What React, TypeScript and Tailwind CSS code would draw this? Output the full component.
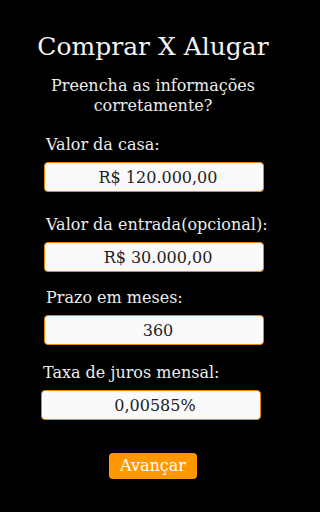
import React, { useState } from 'react';

const Campo: React.FC<{
  label: string;
  value: string;
  onChange: (v: string) => void;
  className?: string;
}> = ({ label, value, onChange, className }) => (
  <div className={'flex flex-col ' + (className ?? '')}>
    <label className="text-[16px] leading-[20px] text-[#ececec] pl-[2px] whitespace-nowrap">{label}</label>
    <input
      type="text"
      value={value}
      onChange={(e) => onChange(e.target.value)}
      className="mt-[7px] h-[30px] w-[220px] rounded-[4px] border border-[#e8890c] bg-[#fafafa] pl-[8px] text-center text-[16px] text-[#222] outline-none"
    />
  </div>
);

const App: React.FC = () => {
  const [valorCasa, setValorCasa] = useState('R$ 120.000,00');
  const [entrada, setEntrada] = useState('R$ 30.000,00');
  const [prazo, setPrazo] = useState('360');
  const [juros, setJuros] = useState('0,00585%');

  return (
    <div className="min-h-[512px] w-full bg-black">
      <div
        className="w-[306px] flex flex-col"
        style={{ fontFamily: '"DejaVu Serif", "Liberation Serif", serif' }}
      >
        <h1 className="mt-[32px] text-center text-[25px] leading-[30px] text-[#f2f2f2]">Comprar X Alugar</h1>
        <p className="mt-[14px] text-center text-[16px] leading-[20px] text-[#ececec]">
          Preencha as informações
          <br />
          corretamente?
        </p>
        <div className="pl-[44px] flex flex-col">
          <Campo className="mt-[19px]" label="Valor da casa:" value={valorCasa} onChange={setValorCasa} />
          <Campo className="mt-[23px]" label="Valor da entrada(opcional):" value={entrada} onChange={setEntrada} />
          <Campo className="mt-[16px]" label="Prazo em meses:" value={prazo} onChange={setPrazo} />
          <Campo className="mt-[18px] -ml-[3px]" label="Taxa de juros mensal:" value={juros} onChange={setJuros} />
        </div>
        <div className="mt-[33px] flex justify-center">
          <button
            type="button"
            className="h-[26px] w-[88px] rounded-[4px] bg-[#ff9800] text-[16px] leading-[26px] text-white"
          >
            Avançar
          </button>
        </div>
      </div>
    </div>
  );
};

export default App;
